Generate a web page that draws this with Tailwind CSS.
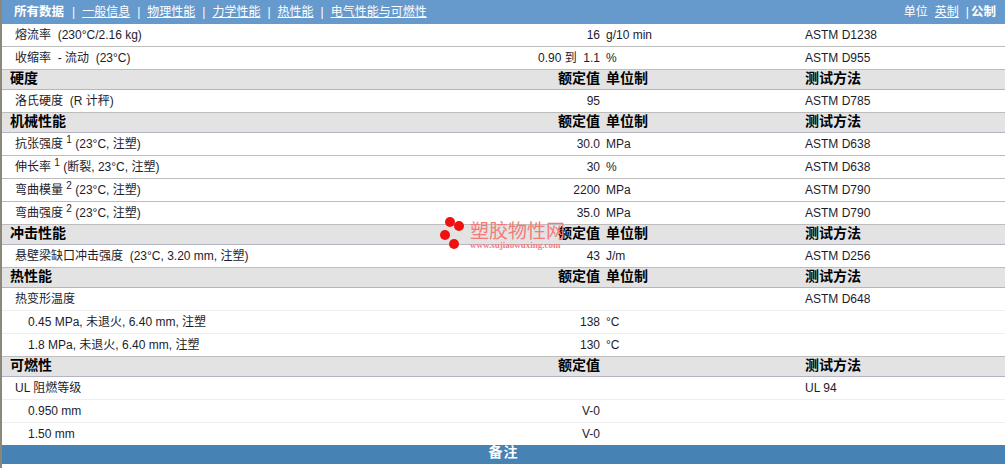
<!DOCTYPE html>
<html lang="zh-CN">
<head>
    <meta charset="UTF-8">
    <title>所有数据</title>
    <script src="https://cdn.jsdelivr.net/npm/@tailwindcss/browser@4"></script>
</head>
<body class="relative w-[1005px] h-[468px] overflow-hidden bg-white border-l-2 border-[#8c8878] text-[12px] text-[#1c1c2c] font-['Liberation_Sans','Noto_Sans_CJK_SC',sans-serif]">

    <!-- 导航 -->
    <div class="flex items-center justify-between h-[24px] bg-[#6699cc] text-white pl-[12px] pr-[9px]">
        <div class="flex items-center">
            <b class="text-[12.5px] mr-[1px]">所有数据</b>
            <span class="mx-[7px]">|</span><u>一般信息</u>
            <span class="mx-[7px]">|</span><u>物理性能</u>
            <span class="mx-[7px]">|</span><u>力学性能</u>
            <span class="mx-[7px]">|</span><u>热性能</u>
            <span class="mx-[7px]">|</span><u>电气性能与可燃性</u>
        </div>
        <div class="flex items-center">
            <span>单位</span><u class="ml-[7px]">英制</u><span class="ml-[7px] mr-[2px]">|</span><b class="text-[12.5px]">公制</b>
        </div>
    </div>

    <div>
        <div class="grid grid-cols-[498px_100px_205px_200px] items-center h-[23px] border-b border-[#bdbdbd]">
            <div class="pl-[13px]">熔流率&nbsp; (230°C/2.16 kg)</div><div class="text-right">16</div><div class="pl-[6px]">g/10 min</div><div>ASTM D1238</div>
        </div>
        <div class="grid grid-cols-[498px_100px_205px_200px] items-center h-[23px] border-b border-[#bdbdbd]">
            <div class="pl-[13px]">收缩率&nbsp; - 流动&nbsp; (23°C)</div><div class="text-right">0.90 到&nbsp; 1.1</div><div class="pl-[6px]">%</div><div>ASTM D955</div>
        </div>
        <div class="grid grid-cols-[498px_100px_205px_200px] items-center h-[20px] pb-[3px] bg-[#e3e3e3] border-b border-[#b4b4c4] text-black font-bold text-[14px] leading-[16px]">
            <div class="pl-[8px]">硬度</div><div class="text-right">额定值</div><div class="pl-[6px]">单位制</div><div>测试方法</div>
        </div>
        <div class="grid grid-cols-[498px_100px_205px_200px] items-center h-[23px] border-b border-[#bdbdbd]">
            <div class="pl-[13px]">洛氏硬度&nbsp; (R 计秤)</div><div class="text-right">95</div><div></div><div>ASTM D785</div>
        </div>
        <div class="grid grid-cols-[498px_100px_205px_200px] items-center h-[20px] pb-[3px] bg-[#e3e3e3] border-b border-[#b4b4c4] text-black font-bold text-[14px] leading-[16px]">
            <div class="pl-[8px]">机械性能</div><div class="text-right">额定值</div><div class="pl-[6px]">单位制</div><div>测试方法</div>
        </div>
        <div class="grid grid-cols-[498px_100px_205px_200px] items-center h-[23px] border-b border-[#bdbdbd]">
            <div class="pl-[13px]">抗张强度 <sup class="text-[10px]">1</sup> (23°C, 注塑)</div><div class="text-right">30.0</div><div class="pl-[6px]">MPa</div><div>ASTM D638</div>
        </div>
        <div class="grid grid-cols-[498px_100px_205px_200px] items-center h-[23px] border-b border-[#bdbdbd]">
            <div class="pl-[13px]">伸长率 <sup class="text-[10px]">1</sup> (断裂, 23°C, 注塑)</div><div class="text-right">30</div><div class="pl-[6px]">%</div><div>ASTM D638</div>
        </div>
        <div class="grid grid-cols-[498px_100px_205px_200px] items-center h-[23px] border-b border-[#bdbdbd]">
            <div class="pl-[13px]">弯曲模量 <sup class="text-[10px]">2</sup> (23°C, 注塑)</div><div class="text-right">2200</div><div class="pl-[6px]">MPa</div><div>ASTM D790</div>
        </div>
        <div class="grid grid-cols-[498px_100px_205px_200px] items-center h-[23px] border-b border-[#bdbdbd]">
            <div class="pl-[13px]">弯曲强度 <sup class="text-[10px]">2</sup> (23°C, 注塑)</div><div class="text-right">35.0</div><div class="pl-[6px]">MPa</div><div>ASTM D790</div>
        </div>
        <div class="grid grid-cols-[498px_100px_205px_200px] items-center h-[20px] pb-[3px] bg-[#e3e3e3] border-b border-[#b4b4c4] text-black font-bold text-[14px] leading-[16px]">
            <div class="pl-[8px]">冲击性能</div><div class="text-right">额定值</div><div class="pl-[6px]">单位制</div><div>测试方法</div>
        </div>
        <div class="grid grid-cols-[498px_100px_205px_200px] items-center h-[23px] border-b border-[#bdbdbd]">
            <div class="pl-[13px]">悬壁梁缺口冲击强度&nbsp; (23°C, 3.20 mm, 注塑)</div><div class="text-right">43</div><div class="pl-[6px]">J/m</div><div>ASTM D256</div>
        </div>
        <div class="grid grid-cols-[498px_100px_205px_200px] items-center h-[20px] pb-[3px] bg-[#e3e3e3] border-b border-[#b4b4c4] text-black font-bold text-[14px] leading-[16px]">
            <div class="pl-[8px]">热性能</div><div class="text-right">额定值</div><div class="pl-[6px]">单位制</div><div>测试方法</div>
        </div>
        <div class="grid grid-cols-[498px_100px_205px_200px] items-center h-[23px] border-b border-[#eeeeee]">
            <div class="pl-[13px]">热变形温度</div><div></div><div></div><div>ASTM D648</div>
        </div>
        <div class="grid grid-cols-[498px_100px_205px_200px] items-center h-[23px] border-b border-[#eeeeee]">
            <div class="pl-[26px]">0.45 MPa, 未退火, 6.40 mm, 注塑</div><div class="text-right">138</div><div class="pl-[6px]">°C</div><div></div>
        </div>
        <div class="grid grid-cols-[498px_100px_205px_200px] items-center h-[23px] border-b border-[#bdbdbd]">
            <div class="pl-[26px]">1.8 MPa, 未退火, 6.40 mm, 注塑</div><div class="text-right">130</div><div class="pl-[6px]">°C</div><div></div>
        </div>
        <div class="grid grid-cols-[498px_100px_205px_200px] items-center h-[20px] pb-[3px] bg-[#e3e3e3] border-b border-[#b4b4c4] text-black font-bold text-[14px] leading-[16px]">
            <div class="pl-[8px]">可燃性</div><div class="text-right">额定值</div><div></div><div>测试方法</div>
        </div>
        <div class="grid grid-cols-[498px_100px_205px_200px] items-center h-[23px] border-b border-[#eeeeee]">
            <div class="pl-[13px]">UL 阻燃等级</div><div></div><div></div><div>UL 94</div>
        </div>
        <div class="grid grid-cols-[498px_100px_205px_200px] items-center h-[23px] border-b border-[#eeeeee]">
            <div class="pl-[26px]">0.950 mm</div><div class="text-right">V-0</div><div></div><div></div>
        </div>
        <div class="grid grid-cols-[498px_100px_205px_200px] items-center h-[22px]">
            <div class="pl-[26px]">1.50 mm</div><div class="text-right">V-0</div><div></div><div></div>
        </div>
    </div>

    <!-- 备注 -->
    <div class="h-[19px] bg-[#4682b4] text-white font-bold text-[14px] tracking-[1px] leading-[15px] text-center">备注</div>

    <!-- 水印 -->
    <div class="absolute left-[438px] top-[216px] w-[130px] h-[36px]">
        <span class="absolute left-[5px] top-[1px] w-[10px] h-[10px] rounded-full bg-[#f01010]"></span>
        <span class="absolute left-[14px] top-[5px] w-[10px] h-[10px] rounded-full bg-[#f01010]"></span>
        <span class="absolute left-[0px] top-[14px] w-[10px] h-[10px] rounded-full bg-[#f01010]"></span>
        <span class="absolute left-[9px] top-[23px] w-[10px] h-[10px] rounded-full bg-[#f01010]"></span>
        <span class="absolute left-[30px] top-[4px] whitespace-nowrap text-[19px] leading-[24px] text-[#f47a7a]">塑胶物性网</span>
        <span class="absolute left-[30px] top-[24px] whitespace-nowrap text-[9px] leading-[10px] font-bold text-[#f47a7a] font-['Liberation_Serif',serif]">www.sujiaowuxing.com</span>
    </div>
</body>
</html>
